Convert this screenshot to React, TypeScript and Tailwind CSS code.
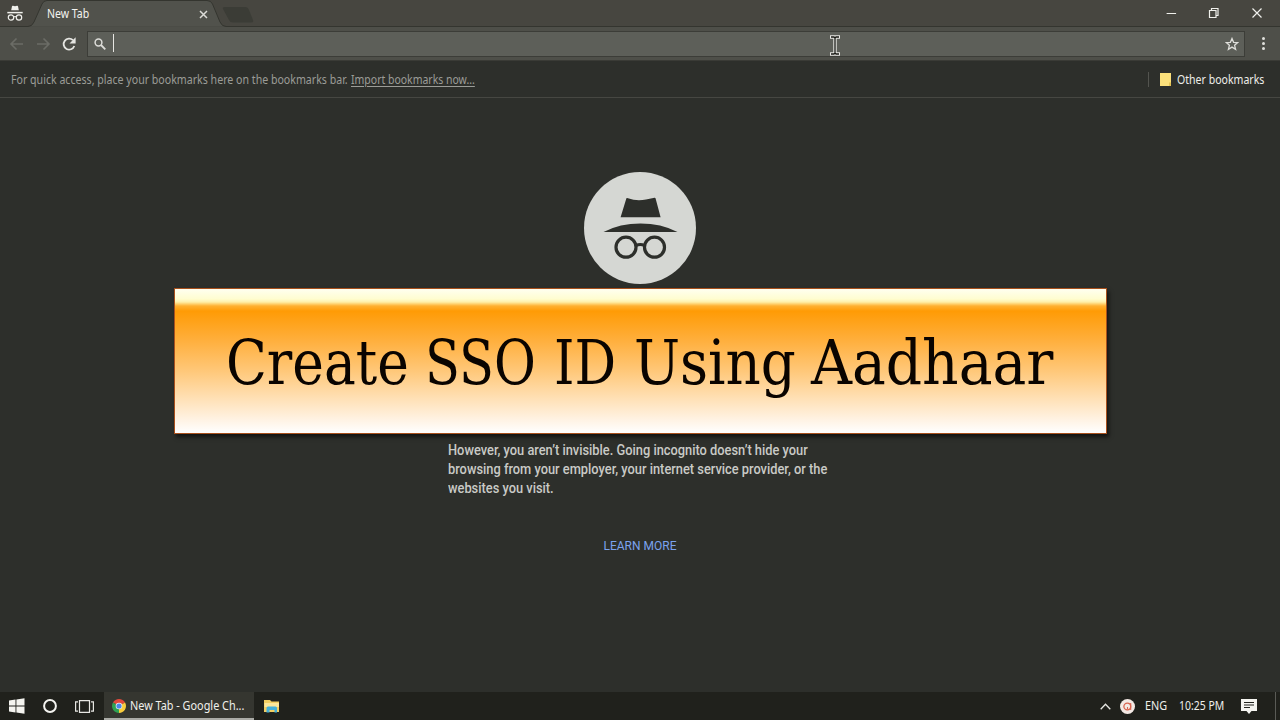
import React from 'react';

interface IconProps {
  className?: string;
}

const SpyIcon: React.FC<IconProps> = ({ className }) => (
  <svg className={className} viewBox="0 0 16 18" fill="none" stroke="#f0f0ec">
    <path d="M4.2 5.2 5 1.2Q5.2.5 6 .8L8 1.3 10 .8Q10.8.5 11 1.2L11.8 5.2Z" fill="#f0f0ec" stroke="none" />
    <path d="M.3 7.6h15.4" strokeWidth="1.5" />
    <circle cx="4" cy="12.5" r="2.7" strokeWidth="1.2" />
    <circle cx="12" cy="12.5" r="2.7" strokeWidth="1.2" />
    <path d="M6.5 12Q8 11 9.5 12" strokeWidth="1.2" />
  </svg>
);

const IncognitoBadge: React.FC<IconProps> = ({ className }) => (
  <svg className={className} viewBox="0 0 112 112">
    <circle cx="56" cy="56" r="56" fill="#d5d7d3" />
    <path d="M42.4 26.2Q43 25.800 44 26.200Q53 29.500 62 27.400L70.500 25.800Q71.400 25.600 71.600 26.400L76.600 45.200H36.600Z" fill="#2d2f2b" />
    <path d="M19.5 60Q36 51.6 56.500 51.600T93.500 60Z" fill="#2d2f2b" />
    <g fill="none" stroke="#2d2f2b" strokeWidth="3.200">
      <circle cx="42" cy="75.200" r="10" />
      <circle cx="70.500" cy="75.200" r="10" />
      <path d="M52 73.500Q56.300 71.500 60.500 73.500" />
    </g>
  </svg>
);

const TitleBar = () => (
  <div className="relative h-[27px] shrink-0 bg-[#474640] flex">
    <svg className="w-[270px] h-[27px] shrink-0" viewBox="0 0 270 27">
      <path d="M0 26.500H28Q32 26.500 34 22L42 4Q43.500 .5 47 .5H207Q211 .5 212.500 4L220 22Q222 26.500 226 26.500H270" fill="#51524c" stroke="#34352f" />
      <path d="M225 7H245Q248 7 249 10L253 20Q254 22.500 251 22.500H233Q230 22.500 229 20L223 9Q222 7 225 7Z" fill="#3b3c36" />
    </svg>
    <div className="grow border-b border-[#34352f]" />
    <div className="absolute inset-0 flex items-center pb-px">
      <SpyIcon className="w-4 h-[18px] ml-[7px] mt-[2px]" />
      <span className="ml-[24px] mt-[2px] w-[150px] text-xs origin-left scale-x-[0.88] text-[#f4f4f0]">New Tab</span>
      <svg className="w-[9px] h-[9px] ml-[2px] mt-[3px]" viewBox="0 0 9 9">
        <path d="M1 1 8 8M8 1 1 8" stroke="#dcdcd8" strokeWidth="1.500" />
      </svg>
      <svg className="w-[96px] h-3 ml-auto mr-[18px]" viewBox="0 0 96 12" fill="none" stroke="#f0f0ec">
        <path d="M.6 6.500h9.500" />
        <path d="M43.500 3.500h6.500v7h-6.500zM45.500 3.500v-2h6.500v7h-2" strokeWidth="1.200" />
        <path d="M86.500 1.500 95.500 10.500M95.500 1.500 86.500 10.500" strokeWidth="1.200" />
      </svg>
    </div>
  </div>
);

const Toolbar = () => (
  <div className="h-[34px] shrink-0 bg-[#4e4f49] flex items-center border-b border-[#3a3b36]">
    <svg className="w-[68px] h-4 ml-[9px]" viewBox="0 0 68 16" fill="none">
      <path d="M14 8H2M7.500 2.500 2 8l5.500 5.500M28 8H40M34.500 2.500 40 8l-5.500 5.500" stroke="#6b6c66" strokeWidth="1.600" />
      <path d="M65.300 10A5.500 5.500 0 1 1 64 4.200" stroke="#e6e6e2" strokeWidth="1.800" />
      <path d="M66.600 1.200V7.400H60.500Z" fill="#e6e6e2" />
    </svg>
    <div className="ml-[10px] w-[1158px] h-[26px] bg-[#5d5f59] border border-[#3c3d38] flex items-center">
      <svg className="w-3 h-3 ml-[6px]" viewBox="0 0 12 12" fill="none" stroke="#dcdcd8">
        <circle cx="4.500" cy="4.500" r="3.400" strokeWidth="1.500" />
        <path d="M7 7 11.300 11.300" strokeWidth="1.800" />
      </svg>
      <div className="ml-[7px] mb-[2px] w-px h-[18px] bg-[#e6e6e2]" />
      <svg className="w-[14px] h-[14px] ml-auto mr-[5px]" viewBox="0 0 14 14" fill="none">
        <path d="M7 1.500 8.600 5.300 12.700 5.600 9.600 8.300 10.600 12.300 7 10.100 3.400 12.300 4.400 8.300 1.300 5.600 5.400 5.300Z" stroke="#dededa" strokeWidth="1.300" />
      </svg>
    </div>
    <div className="ml-[17px] flex flex-col gap-[2px]">
      <i className="w-[3px] h-[3px] rounded-full bg-[#e0e0dc]" />
      <i className="w-[3px] h-[3px] rounded-full bg-[#e0e0dc]" />
      <i className="w-[3px] h-[3px] rounded-full bg-[#e0e0dc]" />
    </div>
  </div>
);

const BookmarksBar = () => (
  <div className="h-[37px] shrink-0 flex items-center border-b border-[#464742] pl-[11px] pr-[15px] pt-px text-xs whitespace-nowrap">
    <span className="w-[340px] origin-left scale-x-[0.884] text-[#9b9c97]">For quick access, place your bookmarks here on the bookmarks bar.</span>
    <span className="origin-left scale-x-[0.873] text-[#9b9c97] underline underline-offset-2">Import bookmarks now...</span>
    <div className="ml-auto w-px h-[15px] bg-[#53544f]" />
    <svg className="w-[11px] h-[13px] ml-[11px]" viewBox="0 0 11 13">
      <path d="M0 0h11v13H0z" fill="#fbe07b" />
      <path d="M9 9.500h2V13H9z" fill="#e3c255" />
    </svg>
    <span className="ml-[6px] w-[88px] origin-left scale-x-[0.88] text-[#eeeeea]">Other bookmarks</span>
  </div>
);

const Banner = () => (
  <div className="absolute left-[174px] top-[288px] w-[933px] h-[146px] pl-[51px] pt-[4px] flex items-center border border-[#a8501c] shadow-[2px_3px_4px_rgba(0,0,0,0.6)] bg-[linear-gradient(to_bottom,#fffff0_0px,#fffdd0_10px,#fff0a8_13px,#ffb030_17px,#ff9b05_22px,#ffae3a_50px,#ffc675_80px,#ffdfb2_108px,#fff2e2_130px,#ffffff_144px)]">
    <h1 className="flex whitespace-nowrap text-[62px] leading-none text-[#0a0400] font-['DejaVu_Serif_Condensed','DejaVu_Serif',serif]">
      <span className="w-[199px] origin-left scale-x-[0.957]">Create&nbsp;</span>
      <span className="w-[129px] origin-left scale-x-[0.915]">SSO&nbsp;</span>
      <span className="w-[80px] origin-left scale-x-[0.93]">ID&nbsp;</span>
      <span className="w-[177px] origin-left scale-x-[0.98]">Using&nbsp;</span>
      <span className="w-[244px] origin-left scale-x-[1.017]">Aadhaar</span>
    </h1>
  </div>
);

const IncognitoPage = () => (
  <div className="grow flex flex-col items-center font-[Roboto,sans-serif]">
    <IncognitoBadge className="w-[112px] h-[112px] mt-[74px]" />
    <p className="mt-[157px] w-[384px] text-sm leading-[19px] origin-left scale-x-[0.917] font-medium text-[#c9cac6] whitespace-nowrap">
      However, you aren’t invisible. Going incognito doesn’t hide your
      <br />
      browsing from your employer, your internet service provider, or the
      <br />
      websites you visit.
    </p>
    <span className="mt-[38px] text-xs leading-[20px] text-[#7ba2ee]">LEARN MORE</span>
  </div>
);

const Taskbar = () => (
  <div className="h-7 shrink-0 bg-[#20211c] flex items-center text-xs text-[#efefeb] whitespace-nowrap">
    <svg className="w-4 h-4 ml-[9px]" viewBox="0 0 16 16" fill="#f4f4f0">
      <path d="M0 2.500 6.500 1.500V7.500H0zM7.400 1.400 15.500.2V7.500H7.400zM0 8.400H6.500V14.400L0 13.500zM7.400 8.400H15.500V15.700L7.400 14.500z" />
    </svg>
    <svg className="w-[14px] h-[14px] ml-[18px]" viewBox="0 0 14 14">
      <circle cx="7" cy="7" r="5.900" fill="none" stroke="#f4f4f0" strokeWidth="2" />
    </svg>
    <svg className="w-[19px] h-[13px] ml-[18px]" viewBox="0 0 19 13" fill="none" stroke="#e6e6e2" strokeWidth="1.200">
      <path d="M4.500.6h10v11.800h-10zM3 1.800H.6v9.400H3M16 1.800h2.400v9.400H16" />
    </svg>
    <div className="ml-[10px] w-[150px] h-7 pt-[2px] bg-[#353630] border-b-2 border-[#aaaba6] flex items-center">
      <svg className="w-[14px] h-[14px] ml-2 shrink-0" viewBox="0 0 14 14">
        <path d="M7 7 .94 3.500A7 7 0 0 1 13.060 3.500Z" fill="#e2493c" />
        <path d="M7 7 13.060 3.500A7 7 0 0 1 7 14Z" fill="#f8cc3c" />
        <path d="M7 7V14A7 7 0 0 1 .94 3.500Z" fill="#2fa152" />
        <circle cx="7" cy="7" r="3.300" fill="#f0f0ec" />
        <circle cx="7" cy="7" r="2.600" fill="#4a86e8" />
      </svg>
      <span className="ml-[4px] origin-left scale-x-[0.905]">New Tab - Google Ch...</span>
    </div>
    <svg className="w-4 h-[14px] ml-[10px]" viewBox="0 0 16 14">
      <path d="M0 1h6l1.500 1.500H15V13H0z" fill="#f2cf63" />
      <path d="M.5 4h14.500v4H.5z" fill="#fbe79b" />
      <path d="M2.500 13.500V9Q2.500 7.500 4 7.500h7.500Q13 7.500 13 9v4.500h-2.500V11h-5v2.500z" fill="#45b0d8" />
    </svg>
    <svg className="w-[11px] h-[7px] ml-auto" viewBox="0 0 11 7">
      <path d="M.7 6.300 5.500 1.200 10.300 6.300" fill="none" stroke="#e6e6e2" strokeWidth="1.300" />
    </svg>
    <svg className="w-[15px] h-[15px] ml-[9px]" viewBox="0 0 15 15" fill="none">
      <circle cx="7.500" cy="7.500" r="7.500" fill="#f3e9e4" />
      <circle cx="7.300" cy="7.500" r="3.400" stroke="#d9644f" strokeWidth="1.300" />
      <path d="M7.500 8v2.200M10.700 4v7" stroke="#d9644f" strokeWidth="1.100" />
    </svg>
    <span className="ml-[10px] w-[22px] origin-left scale-x-[0.9]">ENG</span>
    <span className="ml-[12px] w-[45px] origin-left scale-x-[0.87]">10:25 PM</span>
    <svg className="w-4 h-[15px] ml-[17px]" viewBox="0 0 16 15">
      <path d="M0 0h16v12h-5.500L8 15 5.500 12H0z" fill="#f4f4f0" />
      <path d="M3 3.500h10M3 6h10M3 8.500h6" stroke="#20211c" />
    </svg>
    <div className="ml-[18px] mr-[4px] w-px h-7 bg-[#5a5b56]" />
  </div>
);

const TextCursor = () => (
  <svg className="absolute left-[829px] top-[35px] w-3 h-[21px]" viewBox="0 0 12 21" fill="none">
    <path d="M1 2h4l1 1 1-1h4M6 3v15M1 19h4l1-1 1 1h4" stroke="#e8e8e4" strokeWidth="3.400" />
    <path d="M2 2h3l1 1 1-1h3M6 3v15M2 19h3l1-1 1 1h3" stroke="#181914" strokeWidth="1.300" />
  </svg>
);

const App: React.FC = () => {
  return (
    <div className="relative w-[1280px] h-[720px] overflow-hidden flex flex-col bg-[#2d2f2b] font-['Noto_Sans','Open_Sans',sans-serif]">
      <TitleBar />
      <Toolbar />
      <BookmarksBar />
      <IncognitoPage />
      <Taskbar />
      <Banner />
      <TextCursor />
    </div>
  );
};

export default App;
